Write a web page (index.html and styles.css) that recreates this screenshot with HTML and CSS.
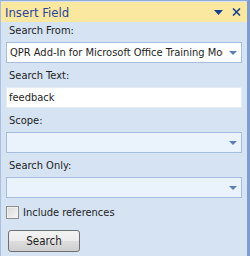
FILE: index.html
```html
<!DOCTYPE html>
<html lang="en">
<head>
    <meta charset="UTF-8">
    <title>Insert Field</title>
    <link rel="stylesheet" href="styles.css">
</head>
<body>
    <div class="pane">
        <div class="titlebar">
            <span class="title">Insert Field</span>
            <span class="title-tools">
                <svg width="9" height="5" viewBox="0 0 9 5"><path d="M0 0h9L4.5 5z" fill="#15428b"/></svg>
                <svg width="9" height="8" viewBox="0 0 9 8"><path d="M1 0.5l7 7M8 0.5l-7 7" stroke="#15428b" stroke-width="1.6"/></svg>
            </span>
        </div>
        <div class="content">
            <label class="lbl">Search From:</label>
            <div class="combo">
                <span class="combo-text">QPR Add-In for Microsoft Office Training Mod</span>
                <span class="arrow"></span>
            </div>
            <label class="lbl">Search Text:</label>
            <div class="textbox">feedback</div>
            <label class="lbl">Scope:</label>
            <div class="combo empty">
                <span class="combo-text"></span>
                <span class="arrow"></span>
            </div>
            <label class="lbl">Search Only:</label>
            <div class="combo empty">
                <span class="combo-text"></span>
                <span class="arrow"></span>
            </div>
            <div class="check-row">
                <span class="checkbox"></span>
                <span>Include references</span>
            </div>
            <button class="btn">Search</button>
        </div>
    </div>
</body>
</html>
```

FILE: styles.css
```css
html, body {
    margin: 0;
    padding: 0;
}
body {
    width: 250px;
    height: 256px;
    font-family: "DejaVu Sans Condensed", "DejaVu Sans", sans-serif;
    font-size: 11px;
    color: #1e1e1e;
    background: #d5e3f3;
    overflow: hidden;
}
.pane {
    height: 256px;
    box-sizing: border-box;
    border-top: 1px solid #8fabd6;
    border-left: 1px solid #a9c0e2;
    border-right: 3px solid #7d9cd0;
    display: flex;
    flex-direction: column;
}
.titlebar {
    height: 20px;
    margin-top: 1px;
    background: #fbe8a0;
    display: flex;
    align-items: center;
    justify-content: space-between;
    padding: 0 6px 0 4px;
}
.title {
    font-size: 13px;
    color: #2b45a0;
}
.title-tools {
    display: flex;
    align-items: center;
    gap: 9px;
}
.content {
    padding: 2px 5px 0 5px;
    display: flex;
    flex-direction: column;
}
.lbl {
    height: 14px;
    line-height: 14px;
    padding-left: 3px;
    margin-bottom: 4px;
}
.combo, .textbox {
    height: 21px;
    box-sizing: border-box;
    border: 1px solid #a7bde0;
    background: #fff;
    display: flex;
    align-items: center;
    margin-bottom: 6px;
}
.combo.empty {
    background: #eaf2fc;
}
.combo-text {
    flex: 1;
    white-space: nowrap;
    overflow: hidden;
    text-overflow: clip;
    padding-left: 3px;
}
.textbox {
    border-color: #e4ebf5;
    padding-left: 2px;
}
.arrow {
    width: 0;
    height: 0;
    border-left: 4px solid transparent;
    border-right: 4px solid transparent;
    border-top: 4px solid #5d7fb6;
    margin: 0 4px 0 6px;
}
.check-row {
    display: flex;
    align-items: center;
    gap: 4px;
    margin: 2px 0 0 0;
    height: 13px;
}
.checkbox {
    width: 11px;
    height: 11px;
    border: 1px solid #8f8f8f;
    background: linear-gradient(135deg, #d9d9d9, #f6f6f6);
    box-shadow: inset 0 0 0 1px #f0f0f0;
}
.btn {
    margin: 11px 0 0 2px;
    width: 72px;
    height: 22px;
    border: 1px solid #707070;
    border-radius: 3px;
    background: linear-gradient(to bottom, #f3f3f3 0%, #ebebeb 50%, #dddddd 51%, #cfcfcf 100%);
    font-family: inherit;
    font-size: 11.5px;
    color: #1e1e1e;
    padding: 0;
}
```
